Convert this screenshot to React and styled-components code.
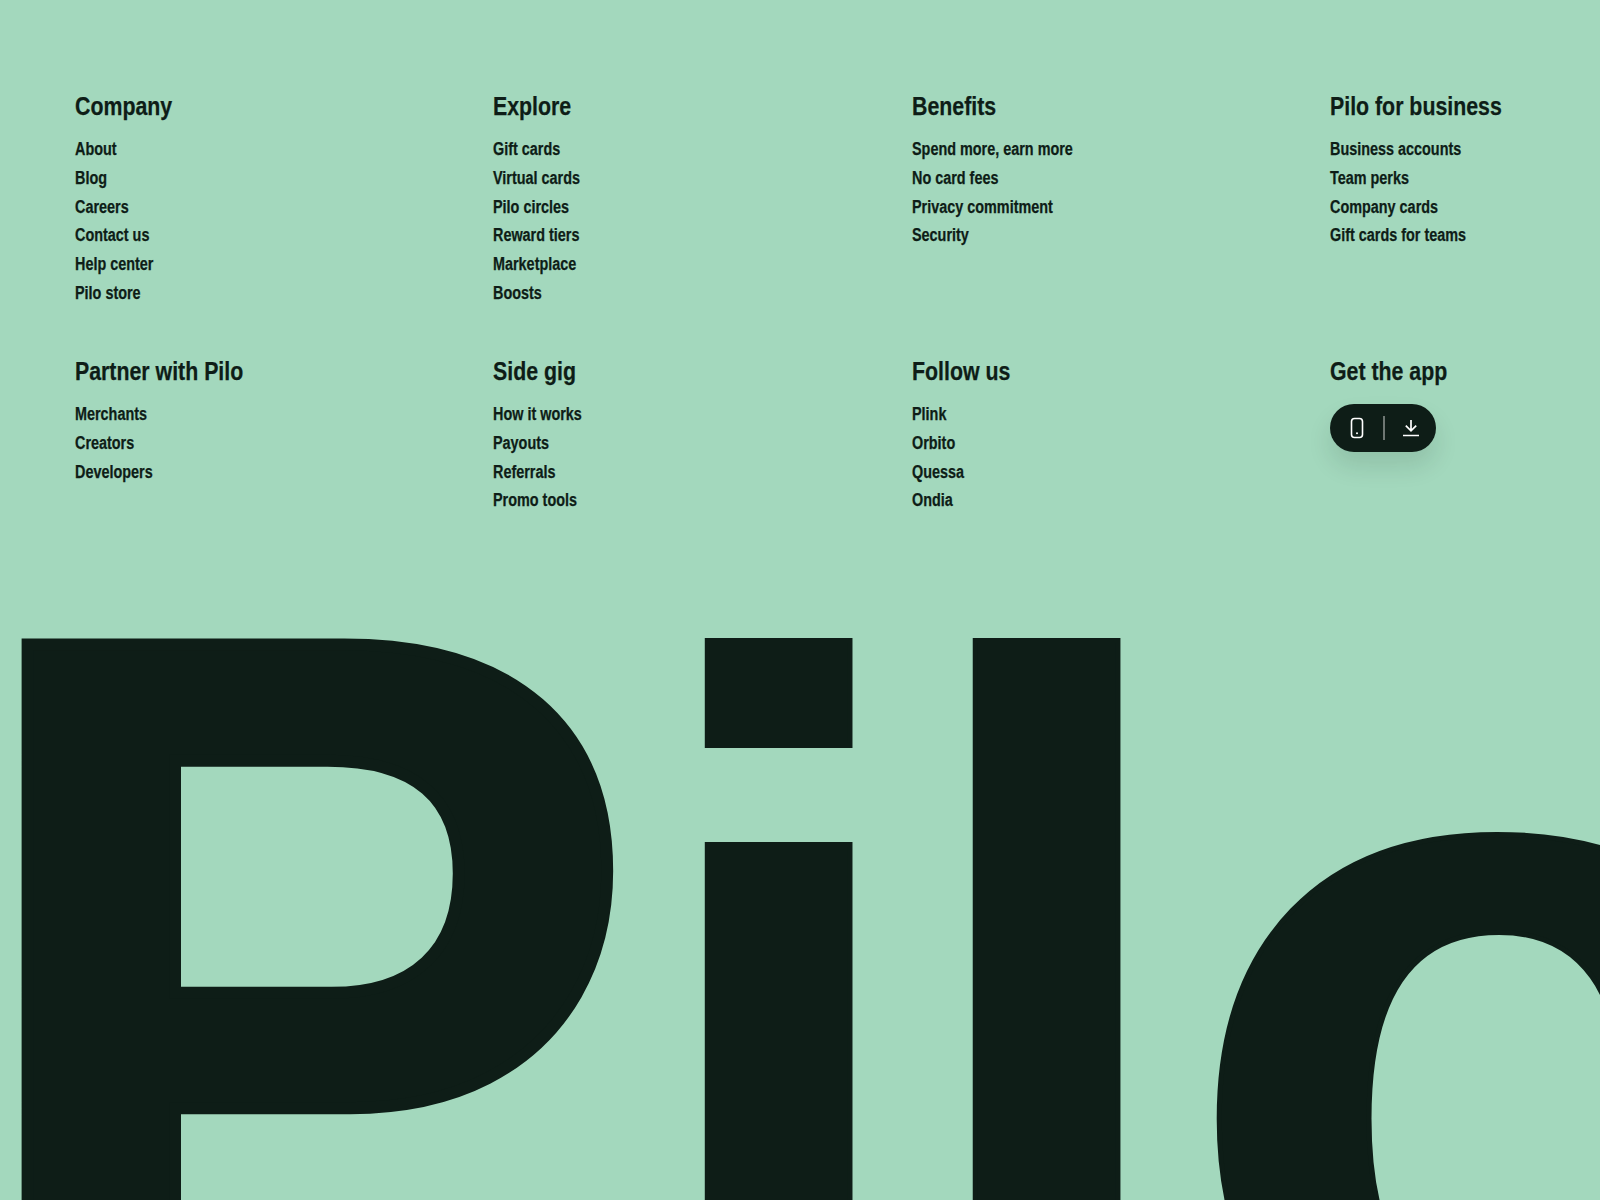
import React from "react"
import styled, { createGlobalStyle } from "styled-components"

const GlobalStyle = createGlobalStyle`
  html, body {
    margin: 0;
    height: 100%;
    background: #a3d8bd;
  }
  body {
    font-family: "Liberation Sans", Arial, sans-serif;
    color: #0e1d17;
  }
`

const Page = styled.div`
  height: 1200px;
  overflow: hidden;
`
const Columns = styled.nav`
  display: grid;
  grid-template-columns: repeat(4, 418.4px);
  grid-auto-rows: 265px;
  padding: 90px 0 0 75px;
  height: 548px;
  box-sizing: border-box;
`
const Column = styled.div`
  display: flex;
  flex-direction: column;
`
const Heading = styled.h3`
  margin: 0 0 13px;
  font-size: 26px;
  line-height: 32px;
  font-weight: 700;
`
const LinkList = styled.ul`
  margin: 0;
  padding: 0;
  list-style: none;
`
const LinkItem = styled.li`
  font-size: 18px;
  line-height: 28.8px;
  font-weight: 700;
`
// no condensed face is installed, so the regular bold gets squeezed
const Narrow = styled.span`
  display: inline-block;
  white-space: nowrap;
  transform: scaleX(${props => props.$ratio});
  transform-origin: left center;
  -webkit-text-stroke: 0.25px currentColor;
`
const AppPill = styled.div`
  display: flex;
  align-items: center;
  justify-content: space-between;
  box-sizing: border-box;
  width: 106px;
  height: 48px;
  margin-top: 4px;
  padding: 0 13px 0 15px;
  border-radius: 24px;
  background: #0e1d17;
  box-shadow: 0 14px 24px rgba(14, 29, 23, 0.12);
  color: #fff;
`
const PillDivider = styled.span`
  width: 1.5px;
  height: 24px;
  background: rgba(255, 255, 255, 0.4);
`
const Wordmark = styled.div`
  font-size: 1040px;
  line-height: 1040px;
  font-weight: 700;
  letter-spacing: -18px;
  white-space: nowrap;
  margin: -68px 0 0 -41px;
  -webkit-text-stroke: 12px currentColor;
`
const WordmarkCap = styled.span`
  display: inline-block;
  transform: scaleX(0.985);
  transform-origin: left center;
`
// the rest of the wordmark sits lower and lighter than the capital
const WordmarkTail = styled.span`
  vertical-align: -34px;
  -webkit-text-stroke: 5px currentColor;
`
const Kerned = styled.span`
  letter-spacing: ${props => props.$kern}px;
`

const PhoneIcon = () => (
  <svg width="24" height="24" viewBox="0 0 24 24" fill="none" stroke="currentColor" strokeWidth="1.6">
    <rect x="6.5" y="2.5" width="11" height="19" rx="3" />
    <circle cx="12" cy="17.2" r="1" fill="currentColor" stroke="none" />
  </svg>
)

const DownloadIcon = () => (
  <svg width="24" height="24" viewBox="0 0 24 24" fill="none" stroke="currentColor" strokeWidth="1.7">
    <path d="M12 4v10.5M6.8 9.6l5.2 5.2 5.2-5.2M4 19.5h16" />
  </svg>
)

const columns = [
  { title: "Company", links: ["About", "Blog", "Careers", "Contact us", "Help center", "Pilo store"] },
  { title: "Explore", links: ["Gift cards", "Virtual cards", "Pilo circles", "Reward tiers", "Marketplace", "Boosts"] },
  { title: "Benefits", links: ["Spend more, earn more", "No card fees", "Privacy commitment", "Security"] },
  { title: "Pilo for business", links: ["Business accounts", "Team perks", "Company cards", "Gift cards for teams"] },
  { title: "Partner with Pilo", links: ["Merchants", "Creators", "Developers"] },
  { title: "Side gig", links: ["How it works", "Payouts", "Referrals", "Promo tools"] },
  { title: "Follow us", links: ["Plink", "Orbito", "Quessa", "Ondia"] },
]

export default function App() {
  return (
    <Page>
      <GlobalStyle />
      <Columns>
        {columns.map(col => (
          <Column key={col.title}>
            <Heading><Narrow $ratio={0.82}>{col.title}</Narrow></Heading>
            <LinkList>
              {col.links.map(link => (
                <LinkItem key={link}><Narrow $ratio={0.8}>{link}</Narrow></LinkItem>
              ))}
            </LinkList>
          </Column>
        ))}
        <Column>
          <Heading><Narrow $ratio={0.82}>Get the app</Narrow></Heading>
          <AppPill>
            <PhoneIcon />
            <PillDivider />
            <DownloadIcon />
          </AppPill>
        </Column>
      </Columns>
      <Wordmark>
        <WordmarkCap>P</WordmarkCap>
        <WordmarkTail>
          <Kerned $kern={-21}>i</Kerned>
          <Kerned $kern={-13}>l</Kerned>o
        </WordmarkTail>
      </Wordmark>
    </Page>
  )
}
